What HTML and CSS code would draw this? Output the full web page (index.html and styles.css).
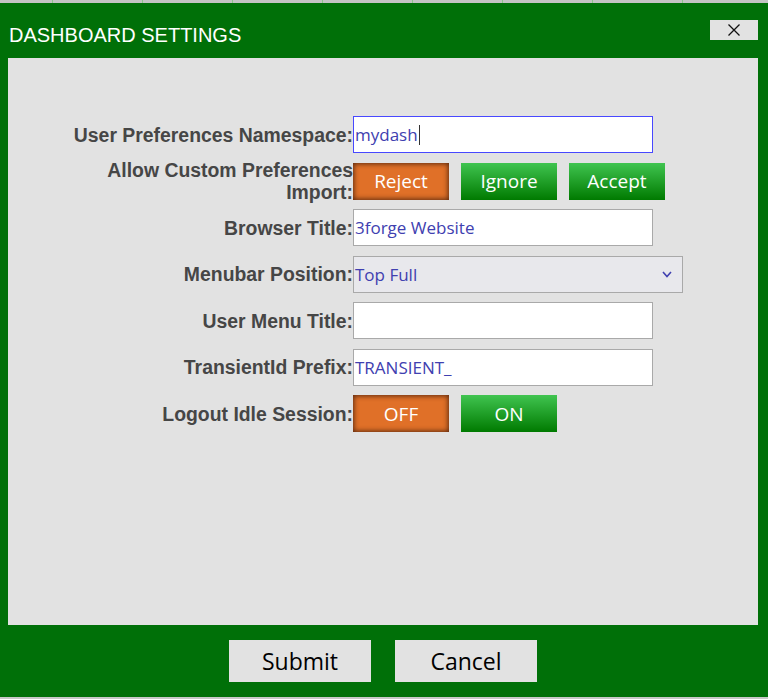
FILE: index.html
```html
<!DOCTYPE html>
<html>
<head>
<meta charset="utf-8">
<link rel="stylesheet" href="styles.css">
</head>
<body>
<div class="topbar"></div>
<div class="dialog">
  <div class="header">
    <div class="title">DASHBOARD SETTINGS</div>
    <div class="close">
      <svg width="12" height="12" viewBox="0 0 12 12"><path d="M0.5 0.5 L11.5 11.5 M11.5 0.5 L0.5 11.5" stroke="#111" stroke-width="1.3" fill="none"/></svg>
    </div>
  </div>
  <div class="panel">
    <div class="form">
      <div class="label">User Preferences Namespace:</div>
      <div class="field focus">mydash<span class="caret"></span></div>

      <div class="label">Allow Custom Preferences Import:</div>
      <div class="btns">
        <div class="btn orange">Reject</div>
        <div class="btn green">Ignore</div>
        <div class="btn green">Accept</div>
      </div>

      <div class="label">Browser Title:</div>
      <div class="field">3forge Website</div>

      <div class="label">Menubar Position:</div>
      <div class="field select">Top Full
        <svg class="chev" width="10" height="7" viewBox="0 0 10 7"><path d="M1 1 L5 5.5 L9 1" stroke="#4040b0" stroke-width="1.6" fill="none"/></svg>
      </div>

      <div class="label">User Menu Title:</div>
      <div class="field"></div>

      <div class="label">TransientId Prefix:</div>
      <div class="field">TRANSIENT_</div>

      <div class="label">Logout Idle Session:</div>
      <div class="btns">
        <div class="btn orange">OFF</div>
        <div class="btn green">ON</div>
      </div>
    </div>
  </div>
  <div class="footer">
    <div class="fbtn">Submit</div>
    <div class="fbtn">Cancel</div>
  </div>
</div>
<div class="bottombar"></div>
</body>
</html>
```
FILE: styles.css
```css
html, body {
  margin: 0;
  padding: 0;
  background: #c8c8c8;
}
body {
  width: 768px;
  height: 699px;
  overflow: hidden;
  font-family: "Liberation Sans", Arial, sans-serif;
}
.topbar {
  height: 3px;
  background-color: #c4c4c4;
  background-image: repeating-linear-gradient(to right, transparent 0, transparent 52px, #8cc48c 52px, #8cc48c 53px, transparent 53px, transparent 90px);
}
.dialog {
  height: 694px;
  background: #007008;
  display: flex;
  flex-direction: column;
}
.header {
  height: 55px;
  display: flex;
  justify-content: space-between;
  align-items: flex-start;
  padding: 0 10px 0 9px;
  box-sizing: border-box;
}
.title {
  margin-top: 21px;
  color: #ffffff;
  font-size: 20px;
  line-height: 23px;
}
.close {
  margin-top: 17px;
  width: 48px;
  height: 20px;
  background: #e2e2e2;
  display: flex;
  align-items: center;
  justify-content: center;
}
.close svg { display: block; }
.panel {
  height: 567px;
  margin: 0 10px 0 8px;
  background: #e2e2e2;
  box-sizing: border-box;
  padding: 58px 0 0 54px;
}
.form {
  display: grid;
  grid-template-columns: 291px auto;
  grid-auto-rows: 37px;
  row-gap: 9.5px;
}
.label {
  display: flex;
  align-items: center;
  justify-content: flex-end;
  text-align: right;
  font-weight: bold;
  font-size: 19.4px;
  line-height: 22px;
  color: #464646;
}
.field {
  width: 300px;
  height: 37px;
  box-sizing: border-box;
  border: 1px solid #a9a9a9;
  background: #ffffff;
  display: flex;
  align-items: center;
  padding-left: 1px;
  font-family: "Open Sans", "Liberation Sans", sans-serif;
  font-size: 17px;
  color: #4040b0;
}
.field.focus {
  border-color: #4848ff;
}
.caret {
  display: inline-block;
  width: 1px;
  height: 20px;
  background: #333;
  margin-left: 1px;
}
.field.select {
  width: 330px;
  background: #e8e8ec;
  justify-content: space-between;
  padding-right: 10px;
}
.chev { display: block; }
.btns {
  display: flex;
  gap: 12px;
}
.btn {
  width: 96px;
  height: 37px;
  display: flex;
  align-items: center;
  justify-content: center;
  font-family: "Open Sans", "Liberation Sans", sans-serif;
  font-size: 19px;
  color: #ffffff;
}
.btn.orange {
  background: #e07028;
  box-shadow: inset 0 0 5px 1px rgba(70, 30, 10, 0.85);
}
.btn.green {
  background: linear-gradient(to bottom, #40c450, #007a00);
}
.footer {
  flex: 1;
  margin: 0 10px 0 8px;
  display: flex;
  justify-content: center;
  align-items: flex-start;
  gap: 24px;
  padding-top: 15px;
}
.fbtn {
  width: 142px;
  height: 42px;
  background: #e2e2e2;
  display: flex;
  align-items: center;
  justify-content: center;
  font-family: "Open Sans", "Liberation Sans", sans-serif;
  font-size: 23px;
  color: #000000;
}
.bottombar {
  height: 2px;
  background: #c8c8c8;
}
```
